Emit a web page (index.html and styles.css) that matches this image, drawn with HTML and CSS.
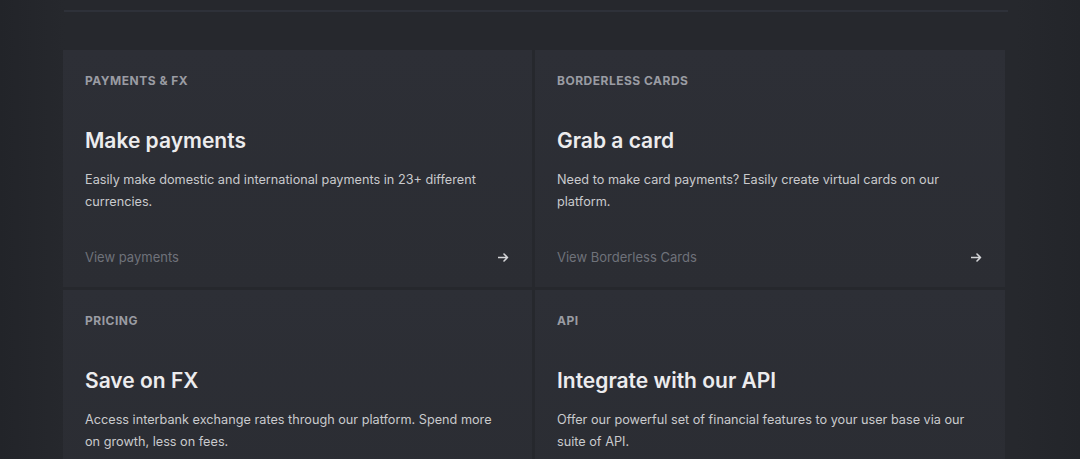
FILE: index.html
```html
<!DOCTYPE html>
<html lang="en">
<head>
<meta charset="utf-8">
<title>Products</title>
<link rel="stylesheet" href="styles.css">
</head>
<body>
<div class="page">
  <div class="rule"></div>
  <div class="grid">
    <div class="card">
      <div class="label">PAYMENTS &amp; FX</div>
      <h2 class="title">Make payments</h2>
      <p class="desc">Easily make domestic and international payments in 23+ different currencies.</p>
      <a class="link" href="#"><span>View payments</span><svg class="arrow" width="11" height="9" viewBox="0 0 11 9"><path d="M0.5 4.5H9.5M6 1L9.5 4.5L6 8" fill="none" stroke="currentColor" stroke-width="1.6" stroke-linecap="round" stroke-linejoin="round"/></svg></a>
    </div>
    <div class="card">
      <div class="label">BORDERLESS CARDS</div>
      <h2 class="title">Grab a card</h2>
      <p class="desc">Need to make card payments? Easily create virtual cards on our platform.</p>
      <a class="link" href="#"><span>View Borderless Cards</span><svg class="arrow" width="11" height="9" viewBox="0 0 11 9"><path d="M0.5 4.5H9.5M6 1L9.5 4.5L6 8" fill="none" stroke="currentColor" stroke-width="1.6" stroke-linecap="round" stroke-linejoin="round"/></svg></a>
    </div>
    <div class="card">
      <div class="label">PRICING</div>
      <h2 class="title">Save on FX</h2>
      <p class="desc">Access interbank exchange rates through our platform. Spend more on growth, less on fees.</p>
    </div>
    <div class="card">
      <div class="label">API</div>
      <h2 class="title">Integrate with our API</h2>
      <p class="desc">Offer our powerful set of financial features to your user base via our suite of API.</p>
    </div>
  </div>
</div>
</body>
</html>
```

FILE: styles.css
```css
* { box-sizing: border-box; }
html, body { margin: 0; padding: 0; }
body {
  background: linear-gradient(90deg, #222429 0%, #26282d 6%, #26282d 94%, #23252a 100%);
  font-family: "Inter", "Liberation Sans", sans-serif;
  height: 459px;
  overflow: hidden;
}
.page {
  width: 945px;
  margin-left: 63px;
  padding-top: 10px;
}
.rule {
  height: 2px;
  margin-left: 1px;
  background: #2e3139;
}
.grid {
  margin-top: 38px;
  display: grid;
  grid-template-columns: 469px 470px;
  column-gap: 3px;
  row-gap: 3px;
}
.card {
  background: linear-gradient(180deg, #2d2f36 0%, #2b2d33 100%);
  padding: 23px 22px 20px 22px;
  display: flex;
  flex-direction: column;
}
.label {
  font-size: 12px;
  line-height: 16px;
  font-weight: 700;
  letter-spacing: 0.5px;
  color: #9a9ca3;
}
.title {
  margin: 38px 0 0 0;
  font-size: 21px;
  line-height: 28px;
  font-weight: 600;
  color: #ececee;
}
.desc {
  margin: 14px 0 0 0;
  font-size: 12.7px;
  line-height: 22px;
  color: #c9cacd;
  max-width: 418px;
  min-height: 44px;
}
.link {
  margin-top: 34px;
  display: flex;
  justify-content: space-between;
  align-items: center;
  padding-right: 1px;
  font-size: 13px;
  line-height: 20px;
  color: #6f727a;
  text-decoration: none;
}
.arrow { color: #d4d5d8; }
```
